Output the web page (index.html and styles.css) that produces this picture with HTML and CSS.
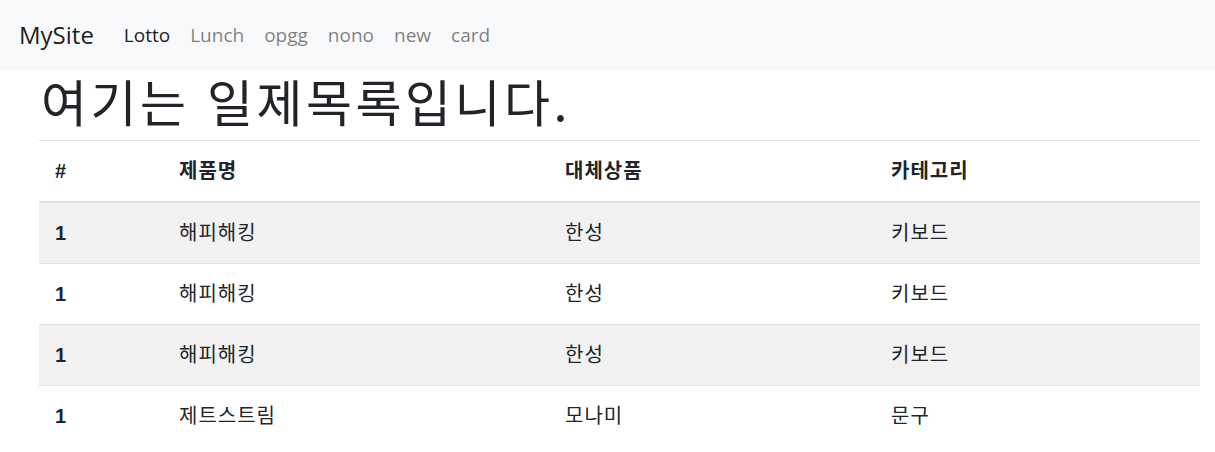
FILE: index.html
```html
<!DOCTYPE html>
<html lang="ko">
<head>
<meta charset="utf-8">
<title>MySite</title>
<link rel="stylesheet" href="styles.css">
</head>
<body>
<nav class="navbar">
  <a class="brand" href="#">MySite</a>
  <ul class="nav">
    <li><a class="nav-link active" href="#">Lotto</a></li>
    <li><a class="nav-link" href="#">Lunch</a></li>
    <li><a class="nav-link" href="#">opgg</a></li>
    <li><a class="nav-link" href="#">nono</a></li>
    <li><a class="nav-link" href="#">new</a></li>
    <li><a class="nav-link" href="#">card</a></li>
  </ul>
</nav>
<main class="content">
  <h1 class="title">여기는 일제목록입니다.</h1>
  <table class="table">
    <colgroup>
      <col class="c1"><col class="c2"><col class="c3"><col class="c4">
    </colgroup>
    <thead>
      <tr><th>#</th><th>제품명</th><th>대체상품</th><th>카테고리</th></tr>
    </thead>
    <tbody>
      <tr><th>1</th><td>해피해킹</td><td>한성</td><td>키보드</td></tr>
      <tr><th>1</th><td>해피해킹</td><td>한성</td><td>키보드</td></tr>
      <tr><th>1</th><td>해피해킹</td><td>한성</td><td>키보드</td></tr>
      <tr><th>1</th><td>제트스트림</td><td>모나미</td><td>문구</td></tr>
    </tbody>
  </table>
</main>
</body>
</html>
```
FILE: styles.css
```css
html, body {
  margin: 0;
  padding: 0;
}
body {
  background: #fff;
  color: #212529;
  font-family: "Open Sans", "Noto Sans CJK KR", sans-serif;
  font-size: 20px;
  line-height: 1.5;
}
a { text-decoration: none; }

.navbar {
  display: flex;
  align-items: center;
  height: 70px;
  box-sizing: border-box;
  padding: 10px 20px 10px 19px;
  background: #f8f9fa;
}
.brand {
  font-family: "Open Sans", sans-serif;
  font-size: 24px;
  color: rgba(0,0,0,.9);
  margin-right: 20px;
  line-height: 1;
}
.nav {
  display: flex;
  list-style: none;
  margin: 0;
  padding: 0;
}
.nav-link {
  display: block;
  padding: 10px 10px;
  font-family: "Open Sans", sans-serif;
  font-size: 19px;
  line-height: 1.2;
  color: rgba(0,0,0,.5);
}
.nav-link.active { color: rgba(0,0,0,.9); }

.content {
  padding: 0 15px 0 39px;
}
.title {
  margin: 0 0 10px 2px;
  height: 60px;
  font-family: "Noto Sans CJK KR", sans-serif;
  font-weight: 400;
  font-size: 50px;
  line-height: 60px;
  letter-spacing: 3.5px;
}
.table {
  width: 1161px;
  border-collapse: collapse;
  font-family: "Liberation Sans", "Noto Sans CJK KR", sans-serif;
  font-size: 20px;
  letter-spacing: 1px;
}
.c1 { width: 124px; }
.c2 { width: 386px; }
.c3 { width: 326px; }
.c4 { width: 325px; }
.table th, .table td {
  text-align: left;
  padding: 15px 15px 15px 16px;
  line-height: 30px;
  height: 30px;
  border-top: 1px solid #dee2e6;
}
.table th { font-weight: 700; }
.table td { font-weight: 400; }
.table thead th {
  border-bottom: 2px solid #dee2e6;
  vertical-align: middle;
}
.table tbody tr:nth-child(odd) { background: #f2f2f2; }
```
